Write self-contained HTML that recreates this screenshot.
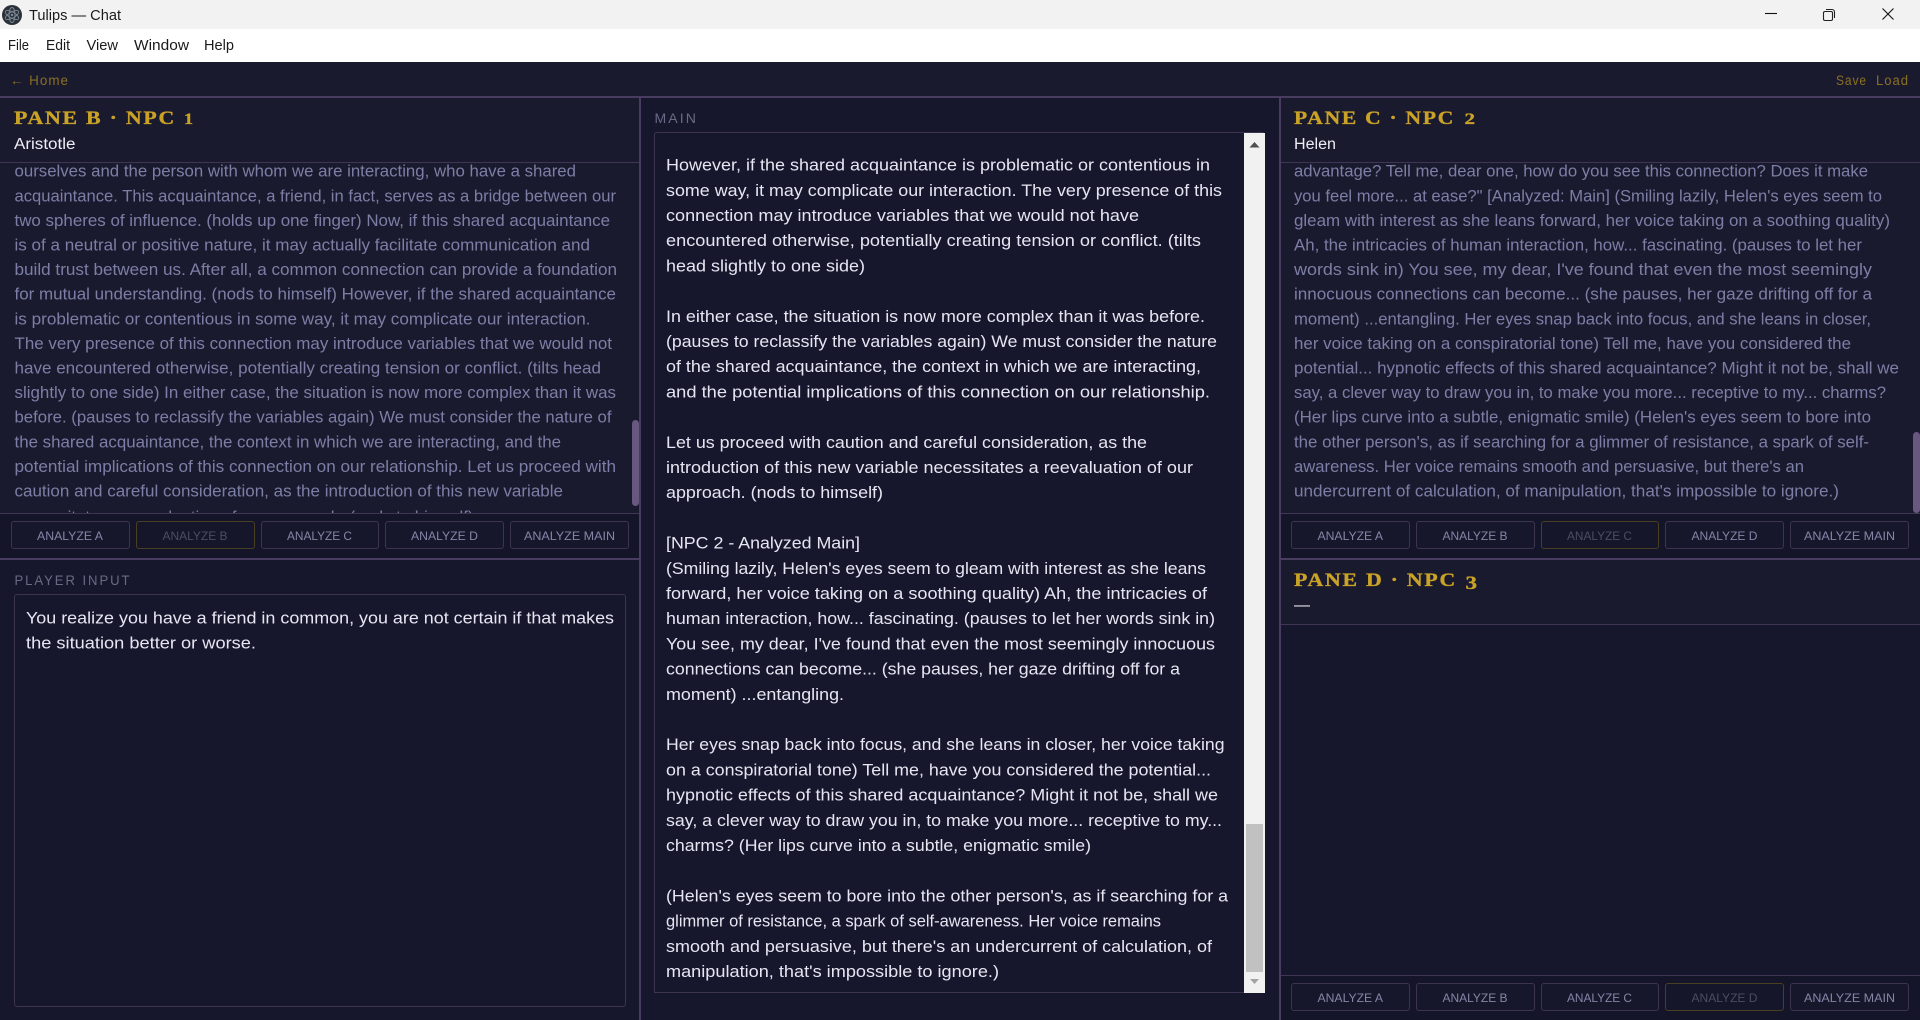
<!DOCTYPE html>
<html><head><meta charset="utf-8"><title>Tulips — Chat</title>
<style>
html,body{margin:0;padding:0;width:1920px;height:1020px;overflow:hidden;background:#1a1a2e}
.b{position:absolute;box-sizing:border-box}
.btn{position:absolute;box-sizing:border-box;height:28px;border:1px solid #3d3450;border-radius:3px;background:#17172c}
.btn.off{border-color:#4a3f22;background:#16162a}
svg.t{position:absolute;left:0;top:0;font-family:"Liberation Sans",sans-serif}
.s{font-size:16.4px;fill:#7d7ea6}
.m{font-size:16.6px;fill:#e6e6f2}
.h{font-family:"Liberation Serif",serif;font-weight:700;font-size:18.5px;fill:#c9a227;stroke:#c9a227;stroke-width:.35px;letter-spacing:1.5px}
.d{font-family:"Liberation Serif",serif;font-weight:700;fill:#c9a227;stroke:#c9a227;stroke-width:.35px}
.n{font-size:15.5px;fill:#eeeef6}
.l{font-size:13.5px;fill:#696a86;letter-spacing:2px}
.g{font-size:13.5px;fill:#8b6f24;letter-spacing:1px}
.a{font-size:12.2px;fill:#8585a8;text-anchor:start}
.ao{font-size:12.2px;fill:#4d4d62}
.w{font-size:14.5px;fill:#1a1a1a}
</style></head><body>
<div class="b" style="left:0;top:0;width:1920px;height:29px;background:#f2f2f2"></div>
<div class="b" style="left:0;top:29px;width:1920px;height:33px;background:#fff"></div>
<div class="b" style="left:0;top:62px;width:1920px;height:34px;background:#1a1a2e"></div>
<div class="b" style="left:0;top:96px;width:1920px;height:2px;background:#483c60"></div>

<!-- left column -->
<div class="b" style="left:0;top:98px;width:639px;height:65px;background:#1a1a2e;border-bottom:1px solid #3f3555"></div>
<div class="b" style="left:0;top:163px;width:639px;height:350px;background:#1a1a2e"></div>
<div class="b" style="left:632px;top:420px;width:7px;height:86px;background:#68587f;border-radius:4px"></div>
<div class="b" style="left:0;top:513px;width:639px;height:45px;background:#15152a;border-top:1px solid #3f3555"></div>
<div class="b" style="left:0;top:558px;width:639px;height:2px;background:#483c60"></div>
<div class="b" style="left:0;top:560px;width:639px;height:460px;background:#16172c"></div>
<div class="b" style="left:14px;top:594px;width:612px;height:413px;border:1px solid #3d3450;border-radius:3px;background:#16172c"></div>
<div class="btn" style="left:11px;top:521px;width:119px"></div>
<div class="btn off" style="left:136px;top:521px;width:119px"></div>
<div class="btn" style="left:261px;top:521px;width:118px"></div>
<div class="btn" style="left:385px;top:521px;width:119px"></div>
<div class="btn" style="left:510px;top:521px;width:119px"></div>

<!-- dividers -->
<div class="b" style="left:639px;top:98px;width:2px;height:922px;background:#483c60"></div>
<div class="b" style="left:1279px;top:98px;width:2px;height:922px;background:#483c60"></div>

<!-- main column -->
<div class="b" style="left:641px;top:98px;width:638px;height:922px;background:#16172c"></div>
<div class="b" style="left:654px;top:132px;width:611px;height:861px;border:1px solid #3d3450;border-radius:3px 3px 0 0;background:#16172c"></div>
<div class="b" style="left:1244px;top:133px;width:21px;height:860px;background:#f1f1f1"></div>
<div class="b" style="left:1246px;top:824px;width:17px;height:148px;background:#c1c1c1"></div>
<svg class="b" style="left:1244px;top:133px" width="21" height="860"><path d="M10.5 9L15.5 14.5H5.5z" fill="#505050"/><path d="M6 846H15L10.5 851z" fill="#a3a3a3"/></svg>

<!-- right column -->
<div class="b" style="left:1281px;top:98px;width:639px;height:65px;background:#1a1a2e;border-bottom:1px solid #3f3555"></div>
<div class="b" style="left:1281px;top:163px;width:639px;height:350px;background:#1a1a2e"></div>
<div class="b" style="left:1913px;top:432px;width:7px;height:81px;background:#68587f;border-radius:4px"></div>
<div class="b" style="left:1281px;top:513px;width:639px;height:45px;background:#15152a;border-top:1px solid #3f3555"></div>
<div class="b" style="left:1281px;top:558px;width:639px;height:2px;background:#483c60"></div>
<div class="b" style="left:1281px;top:560px;width:639px;height:65px;background:#1a1a2e;border-bottom:1px solid #3f3555"></div>
<div class="b" style="left:1281px;top:625px;width:639px;height:350px;background:#16172c"></div>
<div class="b" style="left:1281px;top:975px;width:639px;height:45px;background:#15152a;border-top:1px solid #3f3555"></div>
<div class="btn" style="left:1291px;top:521px;width:119px"></div>
<div class="btn" style="left:1416px;top:521px;width:119px"></div>
<div class="btn off" style="left:1541px;top:521px;width:118px"></div>
<div class="btn" style="left:1665px;top:521px;width:119px"></div>
<div class="btn" style="left:1790px;top:521px;width:119px"></div>
<div class="btn" style="left:1291px;top:983px;width:119px"></div>
<div class="btn" style="left:1416px;top:983px;width:119px"></div>
<div class="btn" style="left:1541px;top:983px;width:118px"></div>
<div class="btn off" style="left:1665px;top:983px;width:119px"></div>
<div class="btn" style="left:1790px;top:983px;width:119px"></div>

<svg class="t" width="1920" height="1020" viewBox="0 0 1920 1020">
<!-- app icon -->
<circle cx="12" cy="15" r="10" fill="#2b3138"/>
<g fill="none" stroke="#7f8c99" stroke-width=".9"><ellipse cx="12" cy="15" rx="7.5" ry="3" transform="rotate(30 12 15)"/><ellipse cx="12" cy="15" rx="7.5" ry="3" transform="rotate(90 12 15)"/><ellipse cx="12" cy="15" rx="7.5" ry="3" transform="rotate(150 12 15)"/></g>
<circle cx="12" cy="15" r="1.2" fill="#7f8c99"/>
<!-- window controls -->
<path d="M1765 13.5H1777" stroke="#111" stroke-width="1.1" fill="none"/>
<g fill="none" stroke="#222" stroke-width="1.1"><rect x="1823.5" y="11.5" width="9" height="9" rx="1.5"/><path d="M1826 9.5h6a2.5 2.5 0 0 1 2.5 2.5v6"/></g>
<path d="M1882.5 8.5L1893.5 19.5M1893.5 8.5L1882.5 19.5" stroke="#111" stroke-width="1.1" fill="none"/>

<text class="w" x="29" y="20" textLength="92" lengthAdjust="spacingAndGlyphs">Tulips — Chat</text>
<text class="w" x="8" y="50" textLength="21" lengthAdjust="spacingAndGlyphs">File</text>
<text class="w" x="46" y="50" textLength="24" lengthAdjust="spacingAndGlyphs">Edit</text>
<text class="w" x="86.5" y="50" textLength="31.5" lengthAdjust="spacingAndGlyphs">View</text>
<text class="w" x="134" y="50" textLength="55" lengthAdjust="spacingAndGlyphs">Window</text>
<text class="w" x="204" y="50" textLength="30" lengthAdjust="spacingAndGlyphs">Help</text>

<text class="g" x="10" y="85" textLength="59" lengthAdjust="spacingAndGlyphs">← Home</text>
<text class="g" x="1836" y="85" textLength="31" lengthAdjust="spacingAndGlyphs">Save</text>
<text class="g" x="1876" y="85" textLength="33" lengthAdjust="spacingAndGlyphs">Load</text>

<!-- headings -->
<text class="h" x="14" y="124" textLength="162" lengthAdjust="spacingAndGlyphs">PANE B · NPC</text>
<text class="d" x="184" y="124" font-size="16" textLength="9" lengthAdjust="spacingAndGlyphs">1</text>
<text class="n" x="14" y="149" textLength="61.5" lengthAdjust="spacingAndGlyphs">Aristotle</text>
<text class="h" x="1294" y="124" textLength="161" lengthAdjust="spacingAndGlyphs">PANE C · NPC</text>
<text class="d" x="1464.5" y="124" font-size="16" textLength="10.5" lengthAdjust="spacingAndGlyphs">2</text>
<text class="n" x="1294" y="149" textLength="42" lengthAdjust="spacingAndGlyphs">Helen</text>
<text class="h" x="1294" y="586" textLength="163" lengthAdjust="spacingAndGlyphs">PANE D · NPC</text>
<text class="d" x="1465.5" y="589" font-size="18.5" textLength="11.5" lengthAdjust="spacingAndGlyphs">3</text>
<text class="n" x="1294" y="610" textLength="16" lengthAdjust="spacingAndGlyphs">—</text>

<text class="l" x="654.5" y="123" textLength="43.5" lengthAdjust="spacingAndGlyphs">MAIN</text>
<text class="l" x="14.5" y="585" textLength="117" lengthAdjust="spacingAndGlyphs">PLAYER INPUT</text>

<!-- button labels -->
<g>
<text class="a" x="37" y="540" textLength="66" lengthAdjust="spacingAndGlyphs">ANALYZE A</text>
<text class="ao" x="162.5" y="540" textLength="65" lengthAdjust="spacingAndGlyphs">ANALYZE B</text>
<text class="a" x="287" y="540" textLength="65" lengthAdjust="spacingAndGlyphs">ANALYZE C</text>
<text class="a" x="411" y="540" textLength="67" lengthAdjust="spacingAndGlyphs">ANALYZE D</text>
<text class="a" x="524" y="540" textLength="91" lengthAdjust="spacingAndGlyphs">ANALYZE MAIN</text>

<text class="a" x="1317.5" y="540" textLength="65.5" lengthAdjust="spacingAndGlyphs">ANALYZE A</text>
<text class="a" x="1442.5" y="540" textLength="65" lengthAdjust="spacingAndGlyphs">ANALYZE B</text>
<text class="ao" x="1567" y="540" textLength="65" lengthAdjust="spacingAndGlyphs">ANALYZE C</text>
<text class="a" x="1691.5" y="540" textLength="66" lengthAdjust="spacingAndGlyphs">ANALYZE D</text>
<text class="a" x="1804" y="540" textLength="91" lengthAdjust="spacingAndGlyphs">ANALYZE MAIN</text>

<text class="a" x="1317.5" y="1002" textLength="65.5" lengthAdjust="spacingAndGlyphs">ANALYZE A</text>
<text class="a" x="1442.5" y="1002" textLength="65" lengthAdjust="spacingAndGlyphs">ANALYZE B</text>
<text class="a" x="1567" y="1002" textLength="65" lengthAdjust="spacingAndGlyphs">ANALYZE C</text>
<text class="ao" x="1691.5" y="1002" textLength="66" lengthAdjust="spacingAndGlyphs">ANALYZE D</text>
<text class="a" x="1804" y="1002" textLength="91" lengthAdjust="spacingAndGlyphs">ANALYZE MAIN</text>
</g>

<!-- player input -->
<g transform="translate(0,-.4)">
<text class="m" x="26" y="624" textLength="588" lengthAdjust="spacingAndGlyphs">You realize you have a friend in common, you are not certain if that makes</text>
<text class="m" x="26" y="649" textLength="230" lengthAdjust="spacingAndGlyphs">the situation better or worse.</text>
</g>

<!-- pane B text -->
<svg x="0" y="163" width="632" height="350" viewBox="0 163 632 350">
<text class="s" x="14.5" y="176.7" textLength="561.5" lengthAdjust="spacingAndGlyphs">ourselves and the person with whom we are interacting, who have a shared</text>
<text class="s" x="14.5" y="201.3" textLength="601.5" lengthAdjust="spacingAndGlyphs">acquaintance. This acquaintance, a friend, in fact, serves as a bridge between our</text>
<text class="s" x="14.5" y="225.9" textLength="595.5" lengthAdjust="spacingAndGlyphs">two spheres of influence. (holds up one finger) Now, if this shared acquaintance</text>
<text class="s" x="14.5" y="250.5" textLength="575.5" lengthAdjust="spacingAndGlyphs">is of a neutral or positive nature, it may actually facilitate communication and</text>
<text class="s" x="14.5" y="275.1" textLength="602.5" lengthAdjust="spacingAndGlyphs">build trust between us. After all, a common connection can provide a foundation</text>
<text class="s" x="14.5" y="299.7" textLength="601.5" lengthAdjust="spacingAndGlyphs">for mutual understanding. (nods to himself) However, if the shared acquaintance</text>
<text class="s" x="14.5" y="324.3" textLength="576" lengthAdjust="spacingAndGlyphs">is problematic or contentious in some way, it may complicate our interaction.</text>
<text class="s" x="14.5" y="348.9" textLength="597.5" lengthAdjust="spacingAndGlyphs">The very presence of this connection may introduce variables that we would not</text>
<text class="s" x="14.5" y="373.5" textLength="586.5" lengthAdjust="spacingAndGlyphs">have encountered otherwise, potentially creating tension or conflict. (tilts head</text>
<text class="s" x="14.5" y="398.1" textLength="601.5" lengthAdjust="spacingAndGlyphs">slightly to one side) In either case, the situation is now more complex than it was</text>
<text class="s" x="14.5" y="422.7" textLength="597" lengthAdjust="spacingAndGlyphs">before. (pauses to reclassify the variables again) We must consider the nature of</text>
<text class="s" x="14.5" y="447.3" textLength="546.5" lengthAdjust="spacingAndGlyphs">the shared acquaintance, the context in which we are interacting, and the</text>
<text class="s" x="14.5" y="471.9" textLength="601.5" lengthAdjust="spacingAndGlyphs">potential implications of this connection on our relationship. Let us proceed with</text>
<text class="s" x="14.5" y="496.5" textLength="548.5" lengthAdjust="spacingAndGlyphs">caution and careful consideration, as the introduction of this new variable</text>
<text class="s" x="14.5" y="522.5" textLength="459" lengthAdjust="spacingAndGlyphs">necessitates a reevaluation of our approach. (nods to himself)</text>
</svg>

<!-- pane C text -->
<svg x="1281" y="163" width="632" height="350" viewBox="1281 163 632 350">
<text class="s" x="1294" y="176.7" textLength="574" lengthAdjust="spacingAndGlyphs">advantage? Tell me, dear one, how do you see this connection? Does it make</text>
<text class="s" x="1294" y="201.3" textLength="588" lengthAdjust="spacingAndGlyphs">you feel more... at ease?" [Analyzed: Main] (Smiling lazily, Helen's eyes seem to</text>
<text class="s" x="1294" y="225.9" textLength="596" lengthAdjust="spacingAndGlyphs">gleam with interest as she leans forward, her voice taking on a soothing quality)</text>
<text class="s" x="1294" y="250.5" textLength="568" lengthAdjust="spacingAndGlyphs">Ah, the intricacies of human interaction, how... fascinating. (pauses to let her</text>
<text class="s" x="1294" y="275.1" textLength="578" lengthAdjust="spacingAndGlyphs">words sink in) You see, my dear, I've found that even the most seemingly</text>
<text class="s" x="1294" y="299.7" textLength="578" lengthAdjust="spacingAndGlyphs">innocuous connections can become... (she pauses, her gaze drifting off for a</text>
<text class="s" x="1294" y="324.3" textLength="577" lengthAdjust="spacingAndGlyphs">moment) ...entangling. Her eyes snap back into focus, and she leans in closer,</text>
<text class="s" x="1294" y="348.9" textLength="557" lengthAdjust="spacingAndGlyphs">her voice taking on a conspiratorial tone) Tell me, have you considered the</text>
<text class="s" x="1294" y="373.5" textLength="605" lengthAdjust="spacingAndGlyphs">potential... hypnotic effects of this shared acquaintance? Might it not be, shall we</text>
<text class="s" x="1294" y="398.1" textLength="592" lengthAdjust="spacingAndGlyphs">say, a clever way to draw you in, to make you more... receptive to my... charms?</text>
<text class="s" x="1294" y="422.7" textLength="577" lengthAdjust="spacingAndGlyphs">(Her lips curve into a subtle, enigmatic smile) (Helen's eyes seem to bore into</text>
<text class="s" x="1294" y="447.3" textLength="575" lengthAdjust="spacingAndGlyphs">the other person's, as if searching for a glimmer of resistance, a spark of self-</text>
<text class="s" x="1294" y="471.9" textLength="510" lengthAdjust="spacingAndGlyphs">awareness. Her voice remains smooth and persuasive, but there's an</text>
<text class="s" x="1294" y="496.5" textLength="545" lengthAdjust="spacingAndGlyphs">undercurrent of calculation, of manipulation, that's impossible to ignore.)</text>
</svg>

<!-- main text -->
<g transform="translate(0,-.4)">
<text class="m" x="666" y="171" textLength="544" lengthAdjust="spacingAndGlyphs">However, if the shared acquaintance is problematic or contentious in</text>
<text class="m" x="666" y="196.2" textLength="556" lengthAdjust="spacingAndGlyphs">some way, it may complicate our interaction. The very presence of this</text>
<text class="m" x="666" y="221.4" textLength="473" lengthAdjust="spacingAndGlyphs">connection may introduce variables that we would not have</text>
<text class="m" x="666" y="246.6" textLength="535" lengthAdjust="spacingAndGlyphs">encountered otherwise, potentially creating tension or conflict. (tilts</text>
<text class="m" x="666" y="271.8" textLength="199" lengthAdjust="spacingAndGlyphs">head slightly to one side)</text>
<text class="m" x="666" y="322.2" textLength="539" lengthAdjust="spacingAndGlyphs">In either case, the situation is now more complex than it was before.</text>
<text class="m" x="666" y="347.4" textLength="551" lengthAdjust="spacingAndGlyphs">(pauses to reclassify the variables again) We must consider the nature</text>
<text class="m" x="666" y="372.6" textLength="535" lengthAdjust="spacingAndGlyphs">of the shared acquaintance, the context in which we are interacting,</text>
<text class="m" x="666" y="397.8" textLength="544" lengthAdjust="spacingAndGlyphs">and the potential implications of this connection on our relationship.</text>
<text class="m" x="666" y="448.2" textLength="481" lengthAdjust="spacingAndGlyphs">Let us proceed with caution and careful consideration, as the</text>
<text class="m" x="666" y="473.4" textLength="527" lengthAdjust="spacingAndGlyphs">introduction of this new variable necessitates a reevaluation of our</text>
<text class="m" x="666" y="498.6" textLength="217" lengthAdjust="spacingAndGlyphs">approach. (nods to himself)</text>
<text class="m" x="666" y="549" textLength="194" lengthAdjust="spacingAndGlyphs">[NPC 2 - Analyzed Main]</text>
<text class="m" x="666" y="574.2" textLength="540" lengthAdjust="spacingAndGlyphs">(Smiling lazily, Helen's eyes seem to gleam with interest as she leans</text>
<text class="m" x="666" y="599.4" textLength="541" lengthAdjust="spacingAndGlyphs">forward, her voice taking on a soothing quality) Ah, the intricacies of</text>
<text class="m" x="666" y="624.6" textLength="549" lengthAdjust="spacingAndGlyphs">human interaction, how... fascinating. (pauses to let her words sink in)</text>
<text class="m" x="666" y="649.8" textLength="549" lengthAdjust="spacingAndGlyphs">You see, my dear, I've found that even the most seemingly innocuous</text>
<text class="m" x="666" y="675" textLength="514" lengthAdjust="spacingAndGlyphs">connections can become... (she pauses, her gaze drifting off for a</text>
<text class="m" x="666" y="700.2" textLength="178" lengthAdjust="spacingAndGlyphs">moment) ...entangling.</text>
<text class="m" x="666" y="750.6" textLength="558.5" lengthAdjust="spacingAndGlyphs">Her eyes snap back into focus, and she leans in closer, her voice taking</text>
<text class="m" x="666" y="775.8" textLength="545" lengthAdjust="spacingAndGlyphs">on a conspiratorial tone) Tell me, have you considered the potential...</text>
<text class="m" x="666" y="801" textLength="552" lengthAdjust="spacingAndGlyphs">hypnotic effects of this shared acquaintance? Might it not be, shall we</text>
<text class="m" x="666" y="826.2" textLength="556" lengthAdjust="spacingAndGlyphs">say, a clever way to draw you in, to make you more... receptive to my...</text>
<text class="m" x="666" y="851.4" textLength="425" lengthAdjust="spacingAndGlyphs">charms? (Her lips curve into a subtle, enigmatic smile)</text>
<text class="m" x="666" y="901.8" textLength="562" lengthAdjust="spacingAndGlyphs">(Helen's eyes seem to bore into the other person's, as if searching for a</text>
<text class="m" x="666" y="927" textLength="495" lengthAdjust="spacingAndGlyphs">glimmer of resistance, a spark of self-awareness. Her voice remains</text>
<text class="m" x="666" y="952.2" textLength="546" lengthAdjust="spacingAndGlyphs">smooth and persuasive, but there's an undercurrent of calculation, of</text>
<text class="m" x="666" y="977.4" textLength="333" lengthAdjust="spacingAndGlyphs">manipulation, that's impossible to ignore.)</text>
</g>
</svg>
</body></html>
